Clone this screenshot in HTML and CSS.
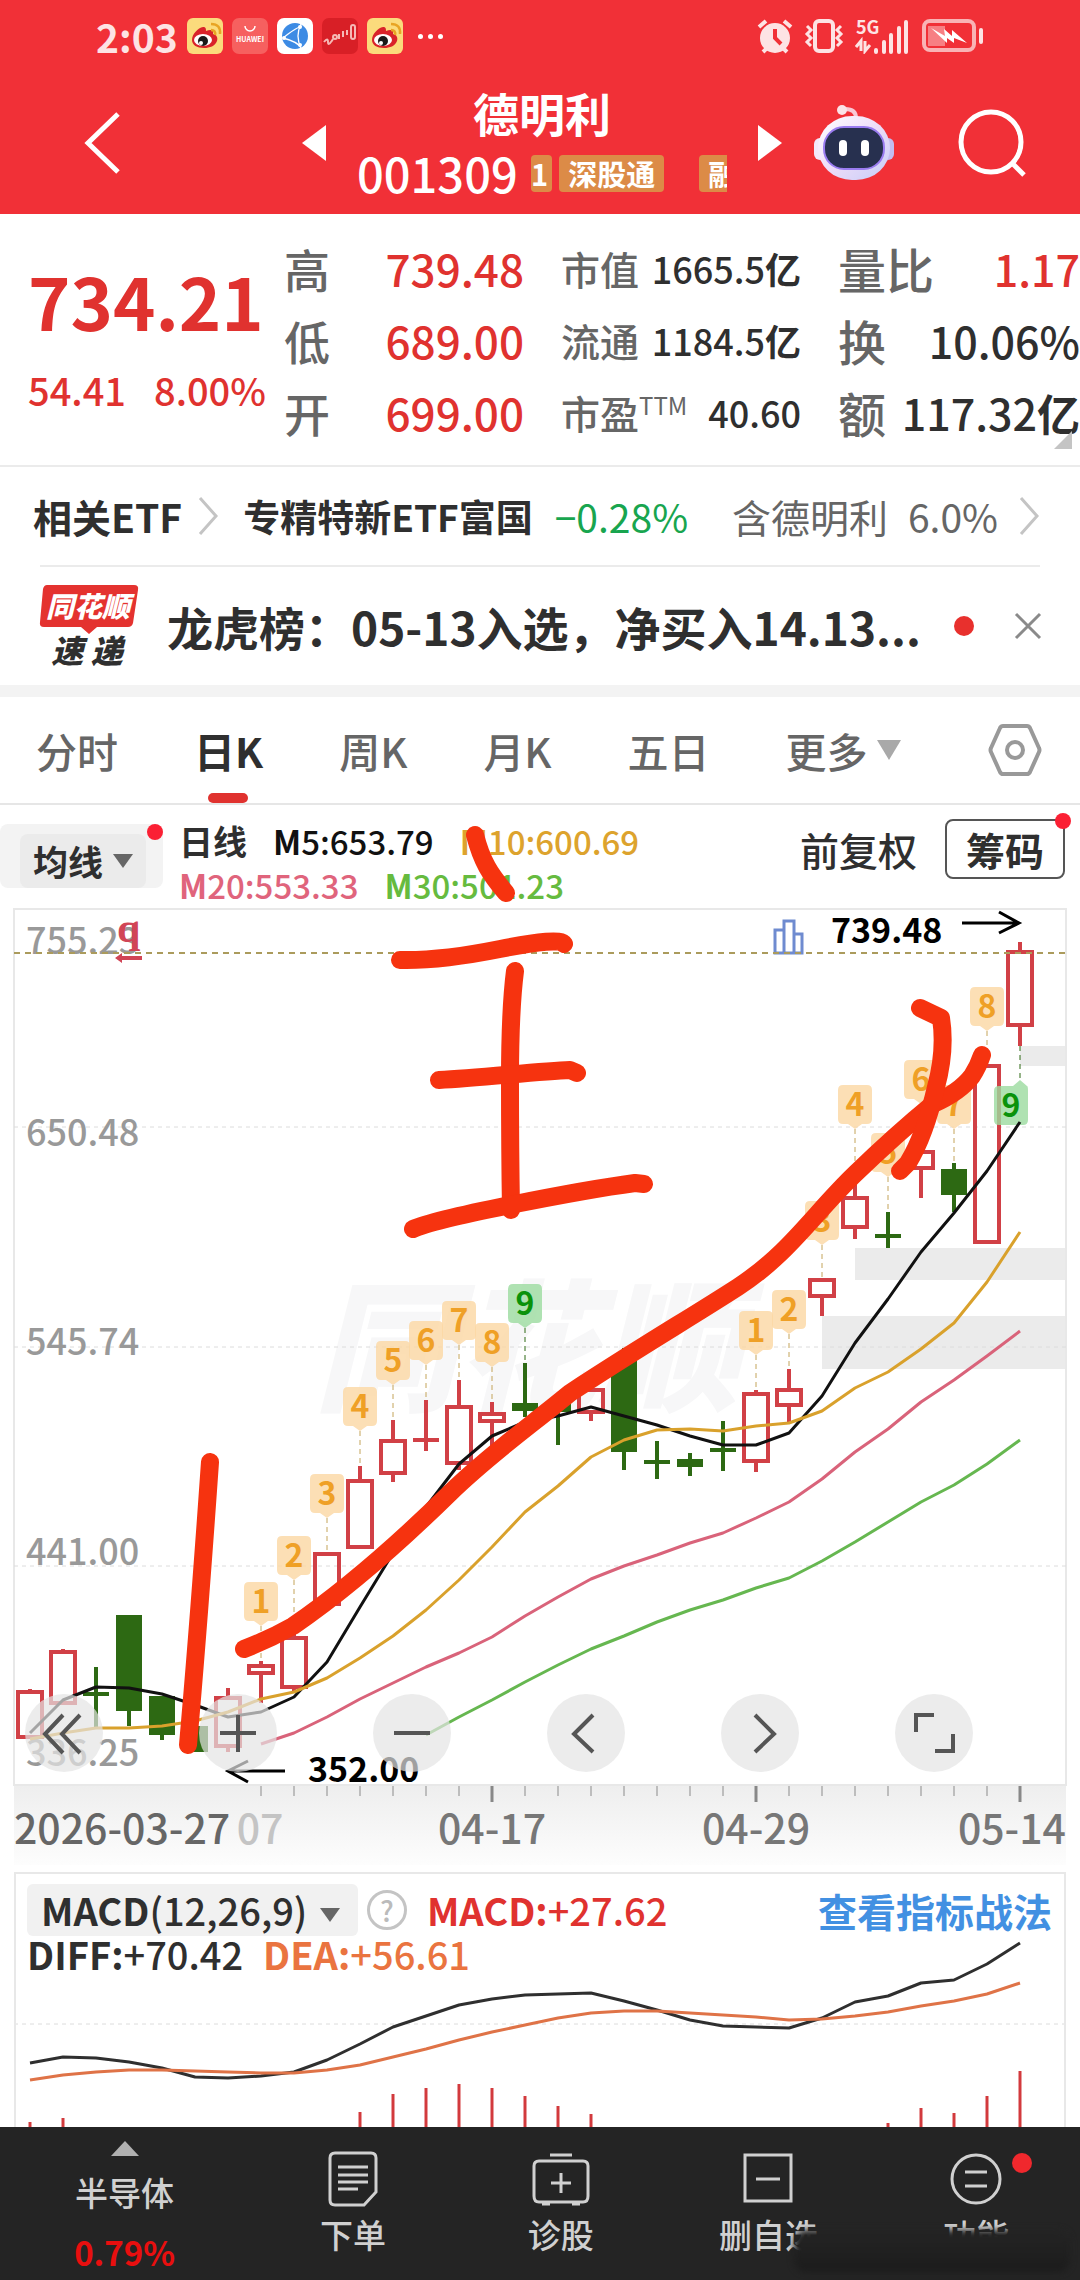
FILE: index.html
```html
<!DOCTYPE html>
<html lang="zh-CN">
<head>
    <meta charset="UTF-8">
    <meta name="viewport" content="width=device-width, initial-scale=1.0">
    <title>德明利 001309</title>
    <link rel="stylesheet" href="styles.css">
</head>
<body>
    <header class="header">
        <div class="status-bar">
            <span class="time">2:03</span>
            <div class="status-apps">
                <svg width="36" height="36" viewBox="0 0 36 36"><use href="#weibo"/></svg>
                <svg width="36" height="36" viewBox="0 0 36 36">
                    <rect width="36" height="36" rx="7" fill="#f6605f"/>
                    <path d="M13 8a5 5 0 0 0 10 0" fill="none" stroke="#fff" stroke-width="1.5"/>
                    <text x="18" y="24" class="huawei">HUAWEI</text>
                </svg>
                <svg width="36" height="36" viewBox="0 0 36 36">
                    <rect width="36" height="36" rx="7" fill="#fff"/>
                    <circle cx="18" cy="18" r="13" fill="#3d8be4"/>
                    <path d="M6 20C14 14 18 10 25 8M6 20c8 2 16 6 18 10M24 6c-4 8-4 16 0 24" fill="none" stroke="#fff" stroke-width="1.3"/>
                    <circle cx="7" cy="20" r="2" fill="#fff"/><circle cx="23" cy="9" r="2" fill="#fff"/><circle cx="23" cy="27" r="2" fill="#fff"/>
                </svg>
                <svg width="36" height="36" viewBox="0 0 36 36">
                    <rect width="36" height="36" rx="7" fill="#d81f26"/>
                    <g fill="none" stroke="#f6b9b5" stroke-width="2">
                        <path d="M2 24q4-5 4 0t5-3"/><circle cx="13" cy="19" r="2"/><path d="M17 21v-5M21 19v-6M25 17v-5"/><rect x="29" y="7" width="4" height="14" rx="2"/>
                    </g>
                </svg>
                <svg width="36" height="36" viewBox="0 0 36 36"><use href="#weibo"/></svg>
            </div>
            <span class="more-dots"><i></i><i></i><i></i></span>
            <div class="status-icons">
                <svg width="36" height="36" viewBox="0 0 36 36">
                    <circle cx="18" cy="20" r="15" fill="#fde3e4"/>
                    <path d="M2 9l7-6M34 9l-7-6M6 34l5-5M30 34l-5-5" stroke="#fde3e4" stroke-width="4"/>
                    <path d="M18 11v9l6 6" fill="none" stroke="#f13037" stroke-width="4"/>
                </svg>
                <svg width="40" height="36" viewBox="0 0 40 36">
                    <rect x="11" y="3" width="18" height="30" rx="4" fill="none" stroke="#fde3e4" stroke-width="4"/>
                    <path d="M3 8l4 4-4 4 4 4-4 4 4 4M37 8l-4 4 4 4-4 4 4 4-4 4" fill="none" stroke="#fde3e4" stroke-width="3"/>
                </svg>
                <svg width="56" height="36" viewBox="0 0 56 36">
                    <text x="1" y="16" class="net">5G</text>
                    <path d="M6 33V23l-5 6M10 23v10l5-6" fill="none" stroke="#fde3e4" stroke-width="3"/>
                    <path d="M21 34v-2M29 34V24M36 34V17M44 34V10M51 34V4" stroke="#fde3e4" stroke-width="4" stroke-linecap="round"/>
                </svg>
                <svg width="62" height="36" viewBox="0 0 62 36">
                    <rect x="2" y="3" width="50" height="29" rx="6" fill="none" stroke="#f9b3b5" stroke-width="4"/>
                    <rect x="6" y="8" width="17" height="20" fill="#f77f83"/>
                    <path d="M9 10l14 8-1-7 8 7 0-6 15 13-13-5 0 5-7-5 0 5z" fill="#fff"/>
                    <rect x="57" y="10" width="4" height="16" rx="2" fill="#fde3e4"/>
                </svg>
            </div>
        </div>

        <div class="nav">
            <button type="button" class="icon-btn back" aria-label="返回">
                <svg width="36" height="64" viewBox="0 0 36 64"><path d="M34 3L4 32l30 29" fill="none" stroke="#fff" stroke-width="5"/></svg>
            </button>
            <button type="button" class="icon-btn" aria-label="上一只">
                <svg width="24" height="36" viewBox="0 0 24 36"><path d="M24 0v36L0 18z" fill="#fff"/></svg>
            </button>
            <div class="stock">
                <h1>德明利</h1>
                <div class="stock-code">
                    <span>001309</span>
                    <div class="tags">
                        <span class="tag tag-cut">1</span>
                        <span class="tag">深股通</span>
                        <span class="tag tag-next">融</span>
                    </div>
                </div>
            </div>
            <button type="button" class="icon-btn" aria-label="下一只">
                <svg width="24" height="36" viewBox="0 0 24 36"><path d="M0 0v36l24-18z" fill="#fff"/></svg>
            </button>
            <button type="button" class="icon-btn" aria-label="助手">
                <svg width="82" height="78" viewBox="0 0 82 78">
                    <defs>
                        <linearGradient id="helmet" x1="0" y1="0" x2="1" y2="1">
                            <stop offset="0" stop-color="#fff"/><stop offset="0.5" stop-color="#eddcf8"/><stop offset="1" stop-color="#c5cdf8"/>
                        </linearGradient>
                    </defs>
                    <path d="M43 14q0-9-11-9" fill="none" stroke="#f9c9d5" stroke-width="4"/>
                    <circle cx="29" cy="6" r="5" fill="#fbe3e8"/>
                    <rect x="1" y="34" width="12" height="22" rx="6" fill="#f3e8fa"/>
                    <rect x="69" y="34" width="12" height="22" rx="6" fill="#c3bdf0"/>
                    <rect x="5" y="12" width="72" height="64" rx="34" fill="url(#helmet)"/>
                    <rect x="11" y="23" width="60" height="42" rx="20" fill="#27304f" stroke="#9a7cf0" stroke-width="2"/>
                    <rect x="26" y="36" width="8" height="16" rx="4" fill="#fff"/>
                    <rect x="48" y="36" width="8" height="16" rx="4" fill="#fff"/>
                </svg>
            </button>
            <button type="button" class="icon-btn search" aria-label="搜索">
                <svg width="68" height="68" viewBox="0 0 68 68"><circle cx="33" cy="33" r="30" fill="none" stroke="#fff" stroke-width="5"/><path d="M54 54l12 12" stroke="#fff" stroke-width="5"/></svg>
            </button>
        </div>
    </header>

    <section class="quote">
        <div class="price">
            <strong>734.21</strong>
            <div class="change"><span>54.41</span><span>8.00%</span></div>
        </div>
        <dl class="col col-price">
            <div><dt>高</dt><dd class="up">739.48</dd></div>
            <div><dt>低</dt><dd class="up">689.00</dd></div>
            <div><dt>开</dt><dd class="up">699.00</dd></div>
        </dl>
        <dl class="col col-cap">
            <div><dt>市值</dt><dd>1665.5<b>亿</b></dd></div>
            <div><dt>流通</dt><dd>1184.5<b>亿</b></dd></div>
            <div><dt>市盈<sup>TTM</sup></dt><dd>40.60</dd></div>
        </dl>
        <dl class="col col-vol">
            <div><dt>量比</dt><dd class="up">1.17</dd></div>
            <div><dt>换</dt><dd>10.06%</dd></div>
            <div><dt>额</dt><dd>117.32<b>亿</b></dd></div>
        </dl>
        <span class="corner"></span>
    </section>

    <section class="etf">
        <a href="#etf" class="etf-title">相关ETF</a>
        <svg width="22" height="40" viewBox="0 0 22 40"><path d="M3 2l16 18L3 38" class="chevron"/></svg>
        <b class="etf-name">专精特新ETF富国</b>
        <span class="down">−0.28%</span>
        <span class="etf-hold">含德明利</span>
        <span class="etf-pct">6.0%</span>
        <svg width="22" height="40" viewBox="0 0 22 40"><path d="M3 2l16 18L3 38" class="chevron"/></svg>
    </section>

    <section class="news">
        <svg width="102" height="84" viewBox="0 0 102 84">
            <path d="M9 1h87q5 0 4 5l-5 33q-1 4-5 4H59l-8 7-8-7H6q-5 0-4-5L5 5q1-4 4-4z" fill="#e4322f"/>
            <text x="50" y="33" class="logo-top">同花顺</text>
            <text x="49" y="79" class="logo-bottom">速 递</text>
        </svg>
        <a href="#news" class="news-title">龙虎榜：05-13入选，净买入14.13...</a>
        <span class="dot"></span>
        <button type="button" class="icon-btn" aria-label="关闭">
            <svg width="28" height="28" viewBox="0 0 28 28"><path d="M2 2l24 24M26 2L2 26" stroke="#8a8a8a" stroke-width="3"/></svg>
        </button>
    </section>

    <nav class="tabs">
        <a href="#fs">分时</a>
        <a href="#day" class="active">日K</a>
        <a href="#week">周K</a>
        <a href="#month">月K</a>
        <a href="#five">五日</a>
        <a href="#more" class="with-arrow">更多 <i class="tri tri-light"></i></a>
        <button type="button" class="icon-btn settings" aria-label="设置">
            <svg width="54" height="54" viewBox="0 0 54 54">
                <path d="M15 3h24q2 0 3 2l9 20q1 2 0 4l-9 20q-1 2-3 2H15q-2 0-3-2L3 29q-1-2 0-4l9-20q1-2 3-2z" fill="none" stroke="#999" stroke-width="4"/>
                <circle cx="27" cy="27" r="8" fill="none" stroke="#999" stroke-width="4"/>
            </svg>
        </button>
    </nav>

    <section class="ma-bar">
        <button type="button" class="ma-select"><span>均线 <i class="tri"></i></span></button>
        <div class="ma-legend">
            <div><b class="ma-name">日线</b><span class="ma5"><b>M</b>5:653.79</span><span class="ma10"><b>M</b>10:600.69</span></div>
            <div><span class="ma20"><b>M</b>20:553.33</span><span class="ma30"><b>M</b>30:501.23</span></div>
        </div>
        <span class="adjust">前复权</span>
        <button type="button" class="chips">筹码</button>
    </section>

    <main class="chart">
        <svg id="kline" class="kline" viewBox="0 905 1080 960"></svg>
        <div class="chart-tools">
            <button type="button" aria-label="最早"><svg viewBox="0 0 78 78"><path d="M38 21L20 40l18 19M55 21L37 40l18 19"/></svg></button>
            <button type="button" aria-label="放大"><svg viewBox="0 0 78 78"><path d="M39 21v37M21 39h36"/></svg></button>
            <button type="button" aria-label="缩小"><svg viewBox="0 0 78 78"><path d="M21 39h36"/></svg></button>
            <button type="button" aria-label="左移"><svg viewBox="0 0 78 78"><path d="M46 21L27 40l19 18"/></svg></button>
            <button type="button" aria-label="右移"><svg viewBox="0 0 78 78"><path d="M34 21l19 19-19 18"/></svg></button>
            <button type="button" aria-label="全屏"><svg viewBox="0 0 78 78"><path d="M21 38V21h18M58 40v17H40"/></svg></button>
        </div>
        <svg class="pen" viewBox="0 905 1080 960">
            <path d="M475 835C482 862 490 874 506 893"/>
            <path d="M400 960Q440 961 500 949T564 944"/>
            <path d="M515 971Q510 1010 510 1080T511 1210"/>
            <path d="M439 1080C480 1078 540 1071 570 1070L577 1073"/>
            <path d="M413 1229Q430 1221 510 1205T635 1183L644 1184"/>
            <path d="M210 1462Q199 1620 188 1745"/>
            <path d="M244 1649Q270 1639 293 1626C350 1587 400 1542 450 1493C490 1454 530 1426 570 1393C640 1347 690 1318 738 1287C790 1253 815 1212 856 1173C885 1145 905 1127 933 1104Q960 1092 972 1076Q978 1067 982 1055"/>
            <path d="M920 1008L941 1018Q946 1050 936 1087Q925 1135 908 1163L900 1171"/>
        </svg>
    </main>

    <section class="macd">
        <div class="macd-row">
            <button type="button" class="macd-select"><b>MACD</b>(12,26,9) <i class="tri"></i></button>
            <button type="button" class="help" aria-label="说明">?</button>
            <span class="up"><b>MACD:</b>+27.62</span>
            <a href="#strategy" class="strategy">查看指标战法</a>
        </div>
        <div class="macd-row macd-values">
            <span><b>DIFF:</b>+70.42</span>
            <span class="dea"><b>DEA:</b>+56.61</span>
        </div>
        <svg id="macdChart" class="macd-chart" viewBox="16 1940 1048 187"></svg>
    </section>

    <footer class="toolbar">
        <a href="#sector" class="sector"><i class="tri-up"></i><span>半导体</span><b>0.79%</b></a>
        <a href="#order">
            <svg width="50" height="56" viewBox="0 0 50 56"><path d="M7 2h36q5 0 5 5v34L36 54H7q-5 0-5-5V7q0-5 5-5zM10 16h30M10 24h30M10 31h30M10 38h20"/></svg>
            <span>下单</span>
        </a>
        <a href="#diagnose">
            <svg width="58" height="56" viewBox="0 0 58 56"><path d="M7 10h44q5 0 5 5v30q0 6-5 6H7q-5 0-5-6V15q0-5 5-5zM18 4h22M29 22v20M19 32h20M10 53h8M40 53h8"/></svg>
            <span>诊股</span>
        </a>
        <a href="#remove">
            <svg width="50" height="56" viewBox="0 0 50 56"><path d="M2 4h46v46H2zM13 28h24"/></svg>
            <span>删自选</span>
        </a>
        <a href="#functions" class="functions">
            <svg width="52" height="56" viewBox="0 0 52 56"><circle cx="26" cy="28" r="24"/><path d="M15 21h22M15 35h22"/></svg>
            <span>功能</span>
        </a>
        <span class="smudge"></span>
    </footer>

    <svg class="defs" width="0" height="0">
        <symbol id="weibo" viewBox="0 0 36 36">
            <rect width="36" height="36" rx="6" fill="#fbdb7c"/>
            <path d="M5 22c0-6 6-12 11-13 3 0 3 2 3 4 5-2 8-1 7 3 4 1 5 4 4 7-2 5-7 7-13 7-7 0-12-3-12-8z" fill="#d9232a"/>
            <ellipse cx="16" cy="22" rx="9" ry="6" fill="#fff"/>
            <circle cx="16" cy="23" r="5" fill="#1a1a1a"/><circle cx="14" cy="25" r="2" fill="#fff"/>
            <path d="M24 12q5 0 4 5M24 6q10 0 9 10" fill="none" stroke="#e8a423" stroke-width="2.5"/>
        </symbol>
    </svg>
    <script src="script.js"></script>
</body>
</html>
```
FILE: styles.css
```css
* {
    box-sizing: border-box;
}

body {
    margin: 0;
    font-family: "Noto Sans CJK SC", "Noto Sans", sans-serif;
    font-weight: 500;
    color: #2f2f2f;
    background-color: #fff;
    overflow-x: hidden;
}

a {
    color: inherit;
    text-decoration: none;
}

button {
    border: none;
    padding: 0;
    font: inherit;
    color: inherit;
    background: none;
    cursor: pointer;
}

svg {
    display: block;
    flex-shrink: 0;
}

.defs {
    position: absolute;
}

.icon-btn {
    display: flex;
}

.up {
    color: #e0322f;
}

.down {
    color: #18a54f;
}

.dot {
    width: 20px;
    height: 20px;
    border-radius: 50%;
    background-color: #e8302d;
}

.tri {
    display: inline-block;
    border: 10px solid transparent;
    border-top: 14px solid #666;
    border-bottom: none;
}

.tri-light {
    border-width: 20px 12px 0;
    border-top-color: #a9a9a9;
}

/* header */
.header {
    height: 214px;
    color: #fff;
    background-color: #f13037;
}

.status-bar {
    display: flex;
    align-items: center;
    height: 72px;
    padding: 0 96px;
}

.time {
    width: 91px;
    font-size: 39px;
    font-weight: bold;
    line-height: 72px;
    color: #fde3e4;
}

.status-apps {
    display: flex;
    gap: 9px;
}

.huawei {
    font-size: 7px;
    font-weight: bold;
    fill: #fff;
    text-anchor: middle;
}

.net {
    font-size: 18px;
    font-weight: bold;
    fill: #fde3e4;
}

.more-dots {
    display: flex;
    gap: 5px;
    margin-left: 15px;
}

.more-dots i {
    width: 5px;
    height: 5px;
    border-radius: 50%;
    background-color: #fff;
}

.status-icons {
    display: flex;
    gap: 11px;
    margin-left: auto;
}

.nav {
    display: flex;
    align-items: center;
    gap: 31px;
    height: 142px;
    padding: 0 54px 0 84px;
}

.back {
    margin-right: auto;
}

.search {
    margin-left: 32px;
}

.stock {
    width: 370px;
    text-align: center;
}

.stock h1 {
    margin: 0;
    font-size: 46px;
    line-height: 60px;
}

.stock-code {
    display: flex;
    align-items: center;
    justify-content: space-between;
    font-size: 47px;
    line-height: 62px;
}

.tags {
    display: flex;
    gap: 7px;
    width: 196px;
    overflow: hidden;
}

.tag {
    flex-shrink: 0;
    padding: 0 9px;
    border-radius: 4px;
    font-size: 29px;
    font-weight: bold;
    line-height: 37px;
    background-color: #dc8b47;
}

.tag-cut {
    padding: 0 4px 0 0;
}

.tag-next {
    margin-left: 28px;
}

/* quote */
.quote {
    position: relative;
    display: flex;
    height: 253px;
    padding: 18px 0 0 28px;
    border-bottom: 2px solid #ebebeb;
}

.price {
    width: 256px;
    padding-top: 23px;
    color: #e0322f;
}

.price strong {
    display: block;
    font-size: 72px;
    line-height: 90px;
}

.change {
    display: flex;
    gap: 28px;
    padding-top: 20px;
    font-size: 38px;
    line-height: 50px;
}

.col {
    margin: 0;
}

.col div {
    display: flex;
    justify-content: space-between;
    align-items: center;
    height: 72px;
    line-height: 72px;
    white-space: nowrap;
}

.col dt {
    color: #666;
}

.col dd {
    margin: 0;
}

.col-price {
    width: 240px;
    font-size: 46px;
}

.col-price dd {
    font-size: 44px;
}

.col-cap {
    width: 240px;
    margin-left: 37px;
    font-size: 39px;
}

.col-cap dd {
    font-size: 36px;
}

.col-cap sup {
    font-size: 24px;
    font-weight: 400;
    line-height: 24px;
}

.col-vol {
    flex: 1;
    margin-left: 37px;
    font-size: 48px;
}

.col-vol dd {
    font-size: 43px;
}

.corner {
    position: absolute;
    right: 8px;
    bottom: 16px;
    border-left: 18px solid transparent;
    border-bottom: 18px solid #c4c4c4;
}

/* etf */
.etf {
    display: flex;
    align-items: center;
    height: 100px;
    margin: 0 40px;
    border-bottom: 2px solid #ebebeb;
    font-size: 39px;
    white-space: nowrap;
}

.etf-title {
    margin: 0 15px 0 -7px;
    font-weight: bold;
}

.etf-name {
    margin: 0 22px 0 24px;
    font-size: 37px;
}

.etf .down,
.etf-hold,
.etf-pct {
    font-weight: 400;
}

.etf-hold,
.etf-pct {
    color: #666;
}

.etf-hold {
    margin-left: auto;
    margin-right: 20px;
}

.etf-pct {
    margin-right: 20px;
}

.chevron {
    fill: none;
    stroke: #c4c4c4;
    stroke-width: 3;
}

/* news */
.news {
    display: flex;
    align-items: center;
    height: 130px;
    padding: 0 38px;
    border-bottom: 12px solid #f3f3f3;
}

.logo-top,
.logo-bottom {
    font-size: 28px;
    font-weight: 900;
    font-style: italic;
    text-anchor: middle;
    fill: #fff;
}

.logo-bottom {
    font-size: 32px;
    fill: #2f2f2f;
}

.news-title {
    flex: 1;
    margin-left: 27px;
    font-size: 46px;
    font-weight: bold;
    white-space: nowrap;
}

.news .icon-btn {
    margin-left: 40px;
}

/* tabs */
.tabs {
    display: flex;
    align-items: center;
    gap: 76px;
    height: 108px;
    padding: 0 38px 0 36px;
    border-bottom: 2px solid #e6e6e6;
    font-size: 41px;
    line-height: 106px;
    color: #666;
    white-space: nowrap;
}

.tabs .active {
    position: relative;
    font-weight: bold;
    color: #2f2f2f;
}

.active::after {
    content: "";
    position: absolute;
    left: 14px;
    bottom: 0;
    width: 40px;
    height: 10px;
    border-radius: 5px;
    background-color: #e0322f;
}

.with-arrow {
    display: flex;
    align-items: center;
    gap: 9px;
}

.settings {
    margin-left: auto;
}

/* moving averages */
.ma-bar {
    display: flex;
    align-items: flex-start;
    height: 100px;
    padding: 14px 15px 0 0;
    white-space: nowrap;
}

.ma-select,
.chips {
    position: relative;
    font-weight: bold;
}

.ma-select::after,
.chips::after {
    content: "";
    position: absolute;
    top: -8px;
    right: -8px;
    width: 16px;
    height: 16px;
    border-radius: 50%;
    background-color: #fb2034;
}

.ma-select::after {
    top: 0;
    right: 0;
}

.ma-select {
    width: 163px;
    height: 64px;
    margin-top: 5px;
    padding: 10px 17px 0 20px;
    border-radius: 8px;
    font-size: 35px;
    line-height: 54px;
    background-color: #f3f3f3;
}

.ma-select span {
    display: flex;
    align-items: center;
    justify-content: center;
    gap: 10px;
    border-radius: 8px;
    background-color: #ebebeb;
}

.ma-legend {
    margin-left: 16px;
    font-size: 33px;
    line-height: 44px;
}

.ma-legend div {
    display: flex;
    gap: 26px;
}

.ma-legend .ma-name {
    font-size: 34px;
}

.ma5 {
    color: #111;
}

.ma10 {
    color: #dda32d;
}

.ma20 {
    color: #e0647c;
}

.ma30 {
    color: #66bb3f;
}

.adjust {
    margin-left: auto;
    margin-right: 28px;
    font-size: 39px;
    line-height: 60px;
}

.chips {
    width: 120px;
    height: 60px;
    border: 2px solid #555;
    border-radius: 8px;
    font-size: 39px;
    line-height: 54px;
}

/* k-line chart */
.chart {
    position: relative;
}

.kline,
.pen {
    width: 100%;
}

.pen {
    position: absolute;
    top: 0;
    left: 0;
    overflow: visible;
    fill: none;
    stroke: #f6330f;
    stroke-width: 18;
    stroke-linecap: round;
    stroke-linejoin: round;
    pointer-events: none;
}

.frame {
    fill: none;
    stroke: #e8e8e8;
    stroke-width: 2;
}

.grid {
    stroke: #dcdcdc;
    stroke-dasharray: 4 4;
}

.current {
    stroke: #ab9b5c;
    stroke-width: 2;
    stroke-dasharray: 6 5;
}

.gap {
    fill: #ebebeb;
}

.watermark {
    font-size: 142px;
    font-weight: 900;
    font-style: italic;
    fill: #f7f7f8;
}

.rise {
    fill: none;
    stroke: #d14046;
    stroke-width: 4;
}

.fall {
    fill: #2d6913;
    stroke: #2d6913;
    stroke-width: 4;
}

.avg {
    fill: none;
    stroke-width: 3;
    stroke-linejoin: round;
}

.avg-5 {
    stroke: #111;
}

.avg-10 {
    stroke: #d9a12c;
}

.avg-20 {
    stroke: #d9637a;
}

.avg-30 {
    stroke: #66b750;
}

.badge {
    fill: #fbd7a2;
    fill-opacity: 0.8;
}

.badge-green {
    fill: #9bdb9f;
    fill-opacity: 0.8;
}

.badge-text {
    font-size: 32px;
    font-weight: bold;
    text-anchor: middle;
    fill: #efa026;
}

.badge-text-green {
    fill: #0a920a;
}

.leader {
    stroke: #c4a45a;
    stroke-dasharray: 5 4;
}

.leader-green {
    stroke: #2d6913;
}

.price-label {
    font-size: 36px;
    fill: #999;
}

.mark {
    font-size: 34px;
    font-weight: bold;
    fill: #000;
}

.arrow {
    fill: none;
    stroke: #000;
    stroke-width: 3;
}

.q-mark {
    font-family: "Liberation Serif", serif;
    font-size: 42px;
    font-weight: bold;
    fill: #d14556;
}

.volume-icon {
    fill: #fff;
    stroke: #6f8bd0;
    stroke-width: 3;
}

.tick {
    stroke: #bdbdbd;
    stroke-width: 2;
}

.tick-major {
    stroke: #888;
    stroke-width: 3;
}

.date {
    font-size: 41px;
    fill: #777;
    text-anchor: middle;
}

.date-start {
    fill: #666;
    text-anchor: start;
}

.date-end {
    text-anchor: end;
}

.date-faded {
    fill: #c4c4c4;
}

.chart-tools {
    position: absolute;
    left: 25px;
    right: 107px;
    bottom: 93px;
    display: flex;
    justify-content: space-between;
}

.chart-tools button {
    width: 78px;
    height: 78px;
    border-radius: 50%;
    background-color: rgba(228, 228, 228, 0.7);
}

.chart-tools path {
    fill: none;
    stroke: #555;
    stroke-width: 4;
}

/* macd */
.macd {
    margin: 7px 14px 0;
    border: 2px solid #e8e8e8;
    border-bottom: none;
}

.macd-row {
    display: flex;
    align-items: center;
    padding: 10px 12px 0 11px;
    font-size: 38px;
    line-height: 52px;
    white-space: nowrap;
}

.macd-select {
    padding: 0 18px 0 14px;
    border-radius: 6px;
    background-color: #f1f1f1;
}

.macd-select .tri {
    margin: 0 0 4px 4px;
}

.help {
    width: 40px;
    height: 40px;
    margin: 0 20px 0 9px;
    border: 3px solid #c4c4c4;
    border-radius: 50%;
    font-size: 28px;
    line-height: 32px;
    color: #bbb;
}

.strategy {
    margin-left: auto;
    font-size: 39px;
    font-weight: bold;
    color: #4290e2;
}

.macd-values {
    gap: 20px;
    padding-top: 0;
    line-height: 36px;
}

.dea {
    color: #ea7440;
}

.macd-chart {
    width: 100%;
    margin-top: -32px;
}

.diff-line,
.dea-line {
    fill: none;
    stroke: #2f2f2f;
    stroke-width: 3;
    stroke-linejoin: round;
}

.dea-line {
    stroke: #df7347;
}

.macd-bar {
    stroke: #d23a3d;
    stroke-width: 3;
}

/* bottom toolbar */
.toolbar {
    position: relative;
    display: grid;
    grid-template-columns: 6fr 5fr 5fr 5fr 5fr;
    height: 153px;
    overflow: hidden;
    font-size: 33px;
    line-height: 48px;
    color: #d0d0d0;
    background-color: #242424;
}

.toolbar a {
    position: relative;
    display: flex;
    flex-direction: column;
    align-items: center;
    gap: 3px;
    padding-top: 24px;
}

.toolbar svg {
    fill: none;
    stroke: #d0d0d0;
    stroke-width: 3;
}

.toolbar .sector {
    gap: 12px;
    padding-top: 14px;
}

.sector b {
    color: #e80f0f;
}

.tri-up {
    border: 14px solid transparent;
    border-top: none;
    border-bottom: 15px solid #b0b0b0;
}

.functions::after {
    content: "";
    position: absolute;
    top: 26px;
    left: 140px;
    width: 20px;
    height: 20px;
    border-radius: 50%;
    background-color: #f0282d;
}

.smudge {
    position: absolute;
    right: 10px;
    bottom: 8px;
    width: 276px;
    height: 42px;
    border-radius: 12px;
    background: linear-gradient(#242424, #1c1c1c);
    filter: blur(3px);
}
```
FILE: script.js
```js
const NS = 'http://www.w3.org/2000/svg';
const x = i => 30 + i * 33;

function add(parent, tag, attrs, text) {
    const el = document.createElementNS(NS, tag);
    for (const key in attrs) el.setAttribute(key, attrs[key]);
    if (text !== undefined) el.textContent = text;
    parent.appendChild(el);
    return el;
}

function line(parent, x1, y1, x2, y2, cls) {
    add(parent, 'line', { x1, y1, x2, y2, class: cls });
}

function curve(parent, start, ys, cls) {
    add(parent, 'polyline', { points: ys.map((y, i) => x(start + i) + ',' + y).join(' '), class: cls });
}

// [rise, high, body top, body bottom, low]
const candles = [
    [1, 1689, 1692, 1737, 1737], [1, 1649, 1652, 1703, 1703], [0, 1667, 1694, 1694, 1727],
    [0, 1615, 1617, 1709, 1726], [0, 1696, 1698, 1733, 1740], [0, 1726, 1728, 1750, 1752],
    [1, 1688, 1698, 1746, 1752], [1, 1661, 1666, 1673, 1703], [1, 1627, 1638, 1687, 1692],
    [1, 1553, 1554, 1604, 1604], [1, 1466, 1481, 1547, 1547], [1, 1420, 1441, 1473, 1482],
    [1, 1400, 1440, 1440, 1451], [1, 1380, 1407, 1463, 1470], [1, 1402, 1414, 1421, 1448],
    [0, 1363, 1405, 1409, 1417], [0, 1397, 1406, 1410, 1445], [1, 1386, 1390, 1412, 1421],
    [0, 1348, 1360, 1450, 1470], [0, 1441, 1462, 1462, 1479], [0, 1453, 1461, 1465, 1476],
    [0, 1421, 1450, 1450, 1471], [1, 1390, 1394, 1461, 1472], [1, 1369, 1390, 1405, 1423],
    [1, 1279, 1280, 1296, 1316], [1, 1177, 1198, 1227, 1239], [0, 1212, 1236, 1236, 1248],
    [1, 1140, 1152, 1168, 1198], [0, 1163, 1171, 1193, 1212], [1, 1065, 1066, 1242, 1242],
    [1, 942, 952, 1025, 1046]
];

// [candle, count, top]
const badges = [
    [7, 1, 1582], [8, 2, 1536], [9, 3, 1474], [10, 4, 1387], [11, 5, 1341], [12, 6, 1321],
    [13, 7, 1301], [14, 8, 1323], [15, 9, 1284], [22, 1, 1311], [23, 2, 1290], [24, 3, 1201],
    [25, 4, 1085], [26, 5, 1133], [27, 6, 1060], [28, 7, 1085], [29, 8, 987]
];

const ma5 = [1733, 1700, 1687, 1688, 1694, 1705, 1717, 1712, 1697, 1662, 1607, 1553, 1507, 1464, 1436, 1422, 1416, 1407, 1416, 1425, 1436, 1445, 1445, 1433, 1396, 1343, 1299, 1252, 1213, 1171, 1122];
const ma10 = [1739, 1733, 1728, 1728, 1726, 1721, 1712, 1699, 1692, 1678, 1658, 1636, 1610, 1580, 1547, 1512, 1486, 1457, 1440, 1430, 1429, 1431, 1426, 1423, 1411, 1388, 1372, 1349, 1323, 1282, 1232];
const ma20 = [1744, 1733, 1717, 1699, 1683, 1667, 1653, 1637, 1616, 1597, 1579, 1566, 1555, 1543, 1533, 1518, 1502, 1479, 1452, 1429, 1402, 1380, 1356, 1331];
const ma30 = [1735, 1717, 1700, 1682, 1665, 1649, 1636, 1622, 1610, 1600, 1588, 1578, 1561, 1542, 1522, 1502, 1485, 1464, 1440];

const kline = document.getElementById('kline');

// date axis background
const defs = add(kline, 'defs', {});
const fade = add(defs, 'linearGradient', { id: 'axisFade', x1: 0, y1: 0, x2: 0, y2: 1 });
add(fade, 'stop', { offset: 0, 'stop-color': '#eeeeee' });
add(fade, 'stop', { offset: 1, 'stop-color': '#fdfdfd' });
add(kline, 'rect', { x: 14, y: 1786, width: 1052, height: 79, fill: 'url(#axisFade)' });

add(kline, 'text', { x: 314, y: 1400, class: 'watermark' }, '同花顺');
[[1020, 1046, 20], [855, 1248, 32], [822, 1316, 53]].forEach(([left, top, height]) => {
    add(kline, 'rect', { x: left, y: top, width: 1066 - left, height, class: 'gap' });
});

add(kline, 'rect', { x: 14, y: 909, width: 1052, height: 876, class: 'frame' });
[1127, 1347, 1566].forEach(y => line(kline, 14, y, 1066, y, 'grid'));
[['755.23', 954], ['650.48', 1146], ['545.74', 1355], ['441.00', 1565], ['336.25', 1766]].forEach(([label, y]) => {
    add(kline, 'text', { x: 26, y, class: 'price-label' }, label);
});
add(kline, 'text', { x: 117, y: 942, class: 'q-mark' }, 'q');
add(kline, 'path', { d: 'M115 958l7-5v3h20v4h-20v3z', fill: '#d14556' });

candles.forEach(([rise, high, top, bottom, low], i) => {
    const cls = rise ? 'rise' : 'fall';
    if (high < top) line(kline, x(i), high, x(i), top, cls);
    if (low > bottom) line(kline, x(i), bottom, x(i), low, cls);
    if (top === bottom) {
        line(kline, x(i) - 13, top, x(i) + 13, top, cls);
    } else {
        const half = rise ? 12 : 11;
        add(kline, 'rect', { x: x(i) - half, y: top, width: half * 2, height: bottom - top, class: cls });
    }
});

badges.forEach(([i, count, top]) => {
    const green = count === 9;
    const cx = x(i);
    line(kline, cx, top + 44, cx, Math.max(candles[i][1], top + 44), green ? 'leader leader-green' : 'leader');
    add(kline, 'path', {
        d: `M${cx - 12} ${top}h24q5 0 5 5v29q0 5-5 5h-5l-7 5-7-5h-5q-5 0-5-5v-29q0-5 5-5z`,
        class: green ? 'badge badge-green' : 'badge'
    });
    add(kline, 'text', { x: cx, y: top + 31, class: green ? 'badge-text badge-text-green' : 'badge-text' }, count);
});

// last signal sits under its candle
line(kline, 1020, 1046, 1020, 1082, 'leader leader-green');
add(kline, 'path', { d: 'M999 1086h14l7-6 7 6q1 0 1 5v29q0 5-5 5h-24q-5 0-5-5v-29q0-5 5-5z', class: 'badge badge-green' });
add(kline, 'text', { x: 1011, y: 1117, class: 'badge-text badge-text-green' }, 9);

curve(kline, 0, ma5, 'avg avg-5');
curve(kline, 0, ma10, 'avg avg-10');
curve(kline, 7, ma20, 'avg avg-20');
curve(kline, 12, ma30, 'avg avg-30');

add(kline, 'path', { d: 'M775 953v-23h9v23zM784 953v-32h10v32zM794 953v-19h8v19z', class: 'volume-icon' });
line(kline, 14, 953, 1066, 953, 'current');
add(kline, 'text', { x: 831, y: 943, class: 'mark' }, '739.48');
add(kline, 'path', { d: 'M962 923h57M999 912l20 11-20 10', class: 'arrow' });
add(kline, 'text', { x: 308, y: 1782, class: 'mark' }, '352.00');
add(kline, 'path', { d: 'M285 1771h-56M248 1761l-20 10 20 11', class: 'arrow' });

for (let i = 7; i <= 30; i++) {
    const major = i === 14 || i === 22 || i === 30;
    line(kline, x(i), 1786, x(i), major ? 1802 : 1796, major ? 'tick tick-major' : 'tick');
}
add(kline, 'text', { x: 14, y: 1844, class: 'date date-start' }, '2026-03-27');
add(kline, 'text', { x: 260, y: 1844, class: 'date date-faded' }, '07');
add(kline, 'text', { x: 492, y: 1844, class: 'date' }, '04-17');
add(kline, 'text', { x: 756, y: 1844, class: 'date' }, '04-29');
add(kline, 'text', { x: 1066, y: 1844, class: 'date date-end' }, '05-14');

// MACD
const macd = document.getElementById('macdChart');
const diff = [2063, 2057, 2058, 2062, 2068, 2077, 2078, 2076, 2072, 2060, 2044, 2027, 2016, 2005, 1999, 1995, 1994, 1993, 2001, 2010, 2020, 2026, 2027, 2028, 2018, 2002, 1996, 1983, 1980, 1964, 1943];
const dea = [2080, 2075, 2072, 2070, 2070, 2071, 2072, 2073, 2073, 2070, 2065, 2057, 2049, 2040, 2032, 2025, 2018, 2013, 2011, 2011, 2013, 2015, 2017, 2020, 2019, 2016, 2012, 2006, 2001, 1994, 1983];
const bars = { 0: 2122, 1: 2118, 10: 2112, 11: 2094, 12: 2088, 13: 2084, 14: 2088, 15: 2096, 16: 2106, 17: 2114, 26: 2123, 27: 2108, 28: 2113, 29: 2096, 30: 2071 };

line(macd, 14, 2024, 1066, 2024, 'grid');
for (const i in bars) line(macd, x(i), bars[i], x(i), 2127, 'macd-bar');
curve(macd, 0, diff, 'diff-line');
curve(macd, 0, dea, 'dea-line');
```
